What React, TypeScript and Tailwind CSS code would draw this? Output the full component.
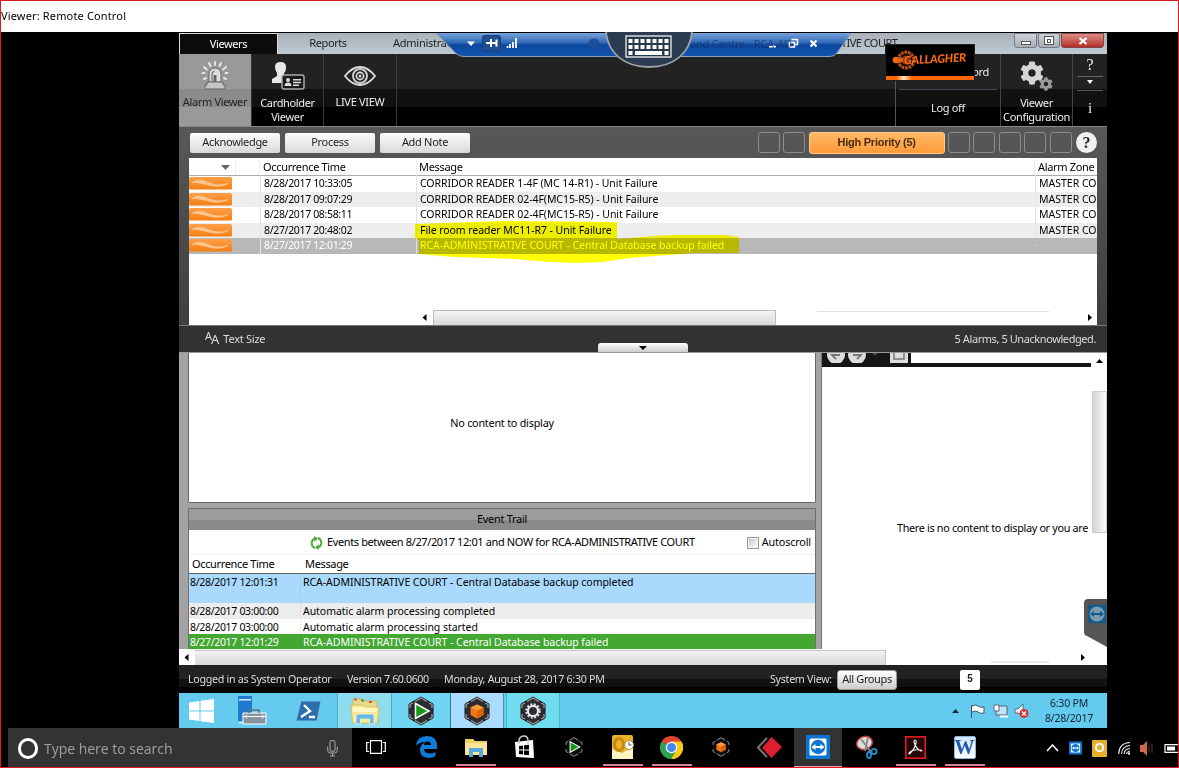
import React from 'react';
import { FaCog } from 'react-icons/fa';

const alarms = [
  { time: '8/28/2017 10:33:05', msg: 'CORRIDOR READER 1-4F (MC 14-R1) - Unit Failure', zone: 'MASTER CO', bg: 'bg-white' },
  { time: '8/28/2017 09:07:29', msg: 'CORRIDOR READER 02-4F(MC15-R5) - Unit Failure', zone: 'MASTER CO', bg: 'bg-[#ededed]' },
  { time: '8/28/2017 08:58:11', msg: 'CORRIDOR READER 02-4F(MC15-R5) - Unit Failure', zone: 'MASTER CO', bg: 'bg-white' },
  { time: '8/27/2017 20:48:02', msg: 'File room reader MC11-R7 - Unit Failure', zone: 'MASTER CO', bg: 'bg-[#ededed]' },
  { time: '8/27/2017 12:01:29', msg: 'RCA-ADMINISTRATIVE COURT - Central Database backup failed', zone: '', bg: 'bg-[#b8b8b8] text-white' },
];

const events = [
  { time: '8/28/2017 12:01:31', msg: 'RCA-ADMINISTRATIVE COURT - Central Database backup completed', cls: 'h-[29px] bg-[#a9dafd]' },
  { time: '8/28/2017 03:00:00', msg: 'Automatic alarm processing completed', cls: 'h-[16px] bg-[#ededed]' },
  { time: '8/28/2017 03:00:00', msg: 'Automatic alarm processing started', cls: 'h-[15px] bg-white' },
  { time: '8/27/2017 12:01:29', msg: 'RCA-ADMINISTRATIVE COURT - Central Database backup failed', cls: 'h-[15px] bg-[#42a832] text-white' },
];

function Wave() {
  return (
    <svg className="block h-[13px] w-[43px]" viewBox="0 0 43 13">
      <defs>
        <linearGradient id="wv" x1="0" y1="0" x2="0" y2="1">
          <stop offset="0" stopColor="#ffa04a" />
          <stop offset="1" stopColor="#f47f14" />
        </linearGradient>
      </defs>
      <rect width="43" height="12.5" rx="1.5" fill="url(#wv)" />
      <path d="M3 5.500Q9 1 19 5.500T39 6.500Q31 11 20 8T3 5.500Z" fill="#ffc48a" stroke="#ffc48a" strokeWidth="1" />
    </svg>
  );
}

function AlarmIcon() {
  return (
    <svg className="h-[30px] w-[28px]" viewBox="0 0 28 30">
      <g stroke="#e4e4e4" strokeWidth="2" strokeLinecap="round">
        <path d="M14 1v3M8 2l1.500 3M20 2l-1.500 3M3 6l3 2.500M25 6l-3 2.500M1.500 12h2M24.500 12h2M3 18l2-1M25 18l-2-1" />
      </g>
      <path d="M8 21V13a6 6 0 0 1 12 0v8z" fill="#dedede" stroke="#666" />
      <path d="M11 20v-6q0-3 2.500-4" fill="none" stroke="#888" strokeWidth="1.500" />
      <rect x="12.500" y="14" width="3" height="7" fill="#666" />
      <path d="M6 21h16v3h2v4H4v-4h2z" fill="#c4c4c4" stroke="#666" />
    </svg>
  );
}

function CardIcon() {
  return (
    <svg className="h-[30px] w-[34px]" viewBox="0 0 34 30">
      <path d="M4 6Q4 1 9.500 1T15 6t-2 6v3l4 3v4H1v-4l5-3v-3Q4 9 4 6Z" fill="#e8e8e8" />
      <rect x="11" y="14" width="22" height="14" rx="2" fill="#1a1a1a" stroke="#aaa" strokeWidth="1.500" />
      <circle cx="17" cy="19" r="2" fill="#ddd" />
      <path d="M13.500 25q0-3.500 3.500-3.500t3.500 3.500zM22 18h8v1.500h-8zM22 20.800h8v1.500h-8zM22 23.500h6V25h-6z" fill="#ddd" />
    </svg>
  );
}

function EyeIcon() {
  return (
    <svg className="h-[20px] w-[32px]" viewBox="0 0 32 20">
      <path d="M1 10Q8 1 16 1t15 9q-7 9-15 9T1 10Z" fill="#222" stroke="#ddd" strokeWidth="1.800" />
      <circle cx="16" cy="10" r="7" fill="#222" stroke="#ccc" strokeWidth="2" />
      <circle cx="16" cy="10" r="3.600" fill="none" stroke="#ddd" strokeWidth="1.600" />
      <circle cx="16" cy="10" r="1.500" fill="#ddd" />
    </svg>
  );
}

function HexIcon({ kind, small }: { kind: 'play' | 'cube' | 'gear'; small?: boolean }) {
  return (
    <svg className={small ? 'h-[24px] w-[20px]' : 'h-[30px] w-[28px]'} viewBox="0 0 28 30">
      <path d="M14 1L26 8v14l-12 7L2 22V8z" fill={small ? '#0d0d0d' : '#2b2d30'} stroke={small ? 'none' : '#15181a'} />
      <path d="M8 5.500L14 2l6 3.500M8 24.500L14 28l6-3.500M3 12V8.500L6 7M3 18v3.500L6 23M25 12V8.500L22 7M25 18v3.500L22 23" fill="none" stroke="#999" strokeWidth="1.300" />
      {kind === 'play' && <path d="M8.500 7.500L22 15 8.500 22.500z" fill="#159a18" stroke="#fff" strokeWidth="1.500" />}
      {kind === 'cube' && (
        <>
          <path d="M14 8.500l6.500 3v7.500L14 22.500 7.500 19v-7.500z" fill="#ee7414" />
          <path d="M14 8.500l6.500 3L14 15l-6.500-3.500z" fill="#ff9a3a" />
          <path d="M14 15l6.500-3.500V19L14 22.500z" fill="#e06008" />
        </>
      )}
      {kind === 'gear' && (
        <>
          <circle cx="14" cy="15" r="6.500" fill="none" stroke="#ddd" strokeWidth="2.400" strokeDasharray="2 1.400" />
          <circle cx="14" cy="15" r="5" fill="none" stroke="#eee" strokeWidth="2" />
        </>
      )}
    </svg>
  );
}

function FolderIcon() {
  return (
    <svg className="h-[20px] w-[22px]" viewBox="0 0 22 20">
      <path d="M0 2h8l2 2h12v14H0z" fill="#f0cf68" />
      <path d="M0 6h22v12H0z" fill="#ffe597" />
      <path d="M4 20v-9h14v9h-4v-5H8v5z" fill="#54abdc" />
    </svg>
  );
}

function LibrariesIcon() {
  return (
    <svg className="h-[28px] w-[32px]" viewBox="0 0 32 28">
      <path d="M4 2h9l2 2h13v7H4z" fill="#e9d98a" stroke="#c9b25c" strokeWidth=".8" />
      <path d="M5 1.500h3v2H5zM20 4h3v2h-3z" fill="#d05a3a" />
      <path d="M12 2.500h3v2h-3z" fill="#4a9a4a" />
      <path d="M2 8h12l2 2h14l-1.500 16H3.500z" fill="#fbe78e" stroke="#d2b95a" strokeWidth=".8" />
      <path d="M4 10l24 1-1 4H4z" fill="#fff6c4" />
      <path d="M7 27v-8q0-2 2-2h14q2 0 2 2v8h-4.500v-5h-9v5z" fill="#6cb9df" stroke="#e2f5fd" strokeWidth=".8" />
    </svg>
  );
}

function TeamViewer({ cls, fill = '#0a75d1' }: { cls: string; fill?: string }) {
  return (
    <svg className={cls} viewBox="0 0 24 24">
      <rect width="24" height="24" fill={fill} />
      <rect x="3.500" y="3.500" width="17" height="17" rx="1.500" fill="#fff" />
      <circle cx="12" cy="12" r="7.200" fill={fill} />
      <path d="M5.500 12l4-3v2h5V9l4 3-4 3v-2h-5v2z" fill="#fff" />
    </svg>
  );
}

function Btn({ children }: { children: React.ReactNode }) {
  return (
    <div className="flex h-[20px] w-[90px] items-center justify-center rounded-[2px] bg-linear-to-b from-[#fdfdfd] to-[#d9d9d9] text-[11px] tracking-[-0.300px] text-[#222]">
      {children}
    </div>
  );
}

function Slot() {
  return <div className="h-[21px] w-[22px] rounded-[3px] border border-[#8c8c8c]" />;
}

function TitleTabs() {
  return (
    <div className="relative flex h-[21px] bg-linear-to-b from-[#a9b1b8] to-[#bfcad3] text-[11px] tracking-[-0.400px] text-[#222]">
      <div className="flex w-[99px] items-center justify-center border border-b-0 border-[#ddd] bg-[#0c0c0c] text-white">Viewers</div>
      <div className="flex w-[100px] items-center justify-center">Reports</div>
      <div className="flex flex-1 items-center pl-[15px] tracking-[-0.250px]">Administration</div>
      <div className="flex w-[266px] items-center tracking-[-0.550px]">TIVE COURT</div>
      <div className="absolute right-[3px] top-0 flex h-[15px] gap-px">
        <div className="flex w-[23px] items-center justify-center rounded-b-[3px] border border-[#778] bg-linear-to-b from-[#ccd3d8] to-[#a8b0b6]">
          <div className="mt-1 h-[4px] w-[10px] border border-[#555] bg-white" />
        </div>
        <div className="flex w-[22px] items-center justify-center rounded-b-[3px] border border-[#778] bg-linear-to-b from-[#ccd3d8] to-[#a8b0b6]">
          <div className="flex h-[9px] w-[10px] items-center justify-center border border-[#555] bg-white">
            <div className="h-[4px] w-[4px] border border-[#555]" />
          </div>
        </div>
        <div className="flex w-[43px] items-center justify-center rounded-b-[3px] border border-[#844] bg-linear-to-b from-[#d98c86] to-[#b32a22]">
          <svg className="h-[8px] w-[10px]" viewBox="0 0 10 8"><path d="M1.500 1l7 6M8.500 1l-7 6" stroke="#fff" strokeWidth="2.300" /></svg>
        </div>
      </div>
    </div>
  );
}

function ConnectionBar() {
  return (
    <div className="absolute left-[255px] top-0 h-[36px] w-[430px]">
      <svg className="absolute left-0 top-0 h-[36px] w-[430px]" viewBox="0 0 430 36">
        <defs>
          <linearGradient id="cb" x1="0" y1="0" x2="0" y2="1">
            <stop offset="0" stopColor="#76a2dc" />
            <stop offset=".42" stopColor="#2f68b4" />
            <stop offset=".5" stopColor="#0d47a0" />
            <stop offset="1" stopColor="#1355ae" />
          </linearGradient>
        </defs>
        <path d="M2 0H417L403 20Q400 23.500 396 23.500H30Q25 23.500 22 20.500Z" fill="url(#cb)" />
        <path d="M2 0L22 20.500Q25 23.500 30 23.500H396Q400 23.500 403 20L417 0" fill="none" stroke="#8fa0b8" strokeWidth="1" />
        <path d="M33 8.500h8l-4 4.500z" fill="#fff" />
        <rect x="48.500" y="2.500" width="18" height="15.500" rx="2" fill="#204e90" stroke="#163d78" />
        <path d="M52 10h4.500M57 6v8M57 10h6M62.500 6.500v7" stroke="#fff" strokeWidth="2" />
        <path d="M73.500 15v-2M76 15v-4M79 15V9M82 15V5" stroke="#fff" strokeWidth="1.800" />
        <circle cx="160" cy="11" r="5.500" fill="#1d4d97" />
        <path d="M335 13.500h7" stroke="#fff" strokeWidth="2" />
        <path d="M357.500 6.500h6v5h-2M355.500 9.500h5v4.500h-5z" fill="none" stroke="#fff" strokeWidth="1.500" />
        <path d="M376.500 7.500l6 6M382.500 7.500l-6 6" stroke="#fff" strokeWidth="2.200" />
      </svg>
      <div className="relative flex h-[22px] items-center pl-[176px] text-[11px] text-[#10295c]/60">
        <span className="w-[80px] text-[#7f8fa8]">10.</span>
        <span className="whitespace-nowrap tracking-[-0.200px]">and Centre - RCA-AD</span>
      </div>
      <svg className="absolute left-[170px] top-[-1px] h-[37px] w-[90px]" viewBox="0 0 90 37">
        <path d="M2 0C4 21 20 35 45 35S86 21 88 0Z" fill="#2b3c50" />
        <path d="M2 0C4 21 20 35 45 35S86 21 88 0" fill="none" stroke="#9aa0a6" strokeWidth="1.800" />
        <rect x="22" y="4" width="45" height="21" fill="#26384b" stroke="#fff" strokeWidth="1.200" />
        <path d="M24.500 9h42M24.500 15h42" stroke="#fff" strokeWidth="4" strokeDasharray="4 2" />
        <path d="M24.500 21h4M31 21h27M60.500 21h4" stroke="#fff" strokeWidth="4" />
      </svg>
    </div>
  );
}

function Ribbon() {
  return (
    <div className="flex h-[72px] bg-[linear-gradient(#222_0_35px,#111_35px_53px,#000_53px)] text-[11px] leading-[14px] tracking-[-0.350px] text-[#eee]">
      <div className="flex w-[73px] flex-col items-center border-r border-[#333] bg-[linear-gradient(#999_0_35px,#8b8b8b_35px_53px,#999_53px)] pt-[7px] text-[#222]">
        <AlarmIcon />
        <span className="mt-[4px] whitespace-nowrap">Alarm Viewer</span>
      </div>
      <div className="flex w-[72px] flex-col items-center border-r border-[#3a3a3a] pt-[7px] text-center">
        <CardIcon />
        <span className="mt-[5px]">Cardholder<br />Viewer</span>
      </div>
      <div className="flex w-[73px] flex-col items-center border-r border-[#3a3a3a] pt-[12px]">
        <EyeIcon />
        <span className="mt-[9px] whitespace-nowrap tracking-[-0.300px]">LIVE VIEW</span>
      </div>
      <div className="flex-1" />
      <div className="flex w-[105px] flex-col border-l border-[#555]">
        <div className="mx-[3px] flex h-[36px] items-center justify-end border-b border-[#445] pr-[8px]">ord</div>
        <div className="flex h-[36px] items-center justify-center">Log off</div>
      </div>
      <div className="flex w-[73px] flex-col items-center border-x border-[#444] pt-[7px] text-center">
        <div className="flex h-[30px] w-[34px] items-start">
          <FaCog className="h-[24px] w-[24px] shrink-0 text-[#d5d5d5]" />
          <FaCog className="-ml-[5px] mt-[16px] h-[14px] w-[14px] shrink-0 text-[#999]" />
        </div>
        <span className="mt-[5px]">Viewer<br />Configuration</span>
      </div>
      <div className="flex w-[34px] flex-col items-center font-['Liberation_Serif',serif] text-[16px]">
        <div className="flex h-[23px] w-[26px] items-center justify-center border-b border-[#666]">?</div>
        <svg className="mt-[3px] h-[4px] w-[6px]" viewBox="0 0 6 4"><path d="M0 0h6L3 4z" fill="#fff" /></svg>
        <div className="mt-[6px] w-[26px] border-t border-[#555]" />
        <div className="mt-[10px] text-[15px]">i</div>
      </div>
    </div>
  );
}

function LogoBadge() {
  return (
    <div className="absolute left-[706px] top-[11px] h-[37px] w-[90px] border border-[#222] bg-black">
      <svg className="absolute left-[6px] top-[4px] h-[23px] w-[28px]" viewBox="0 0 30 25">
        <circle cx="15" cy="12" r="8.500" fill="none" stroke="#b84c18" strokeWidth="3.500" strokeDasharray="3 .8" />
        <circle cx="15" cy="12" r="5" fill="#8f3510" />
        <circle cx="4" cy="12" r="3.500" fill="#f26a12" />
        <circle cx="9" cy="12" r="3" fill="#e05a10" />
      </svg>
      <div className="absolute left-[18px] top-[6px] -rotate-3 font-['Lato',sans-serif] text-[11.500px] font-black italic leading-[15px] tracking-[-0.100px] text-[#f96a10]">GALLAGHER</div>
      <div className="absolute bottom-0 left-0 h-[4px] w-full bg-[linear-gradient(90deg,#f60_0,#f60_12%,#ffe2c0_20%,#f60_30%,#f60)]" />
    </div>
  );
}

function AlarmPanel() {
  return (
    <div className="relative h-[226px] border-t border-[#888] bg-linear-to-b from-[#585858] to-[#3c3c3c]">
      <div className="flex h-[31px] items-center pl-[11px] pr-[10px]">
        <div className="flex gap-[5px]">
          <Btn>Acknowledge</Btn>
          <Btn>Process</Btn>
          <Btn>Add Note</Btn>
        </div>
        <div className="ml-auto flex items-center gap-[3.400px]">
          <Slot /><Slot />
          <div className="flex h-[22px] w-[136px] items-center justify-center rounded-[3px] border border-[#ffc98a] bg-linear-to-b from-[#ffb765] to-[#ff9b38] font-['Liberation_Sans',sans-serif] text-[11px] font-bold tracking-[-0.250px] text-[#4a2c0c]">High Priority (5)</div>
          <Slot /><Slot /><Slot /><Slot /><Slot />
          <div className="ml-px flex h-[21px] w-[21px] items-center justify-center rounded-full bg-[#f0f0f0] font-['Liberation_Serif',serif] text-[16px] font-bold text-[#222]">?</div>
        </div>
      </div>
      <div className="relative ml-[10px] flex h-[167px] w-[908px] flex-col overflow-hidden bg-white text-[11px] text-black">
        <div className="flex h-[18px] items-center border-b border-[#aaa] pt-px tracking-[-0.330px]">
          <div className="flex h-full w-[47px] items-center border-r border-[#eee] pl-[32px]">
            <svg className="h-[5px] w-[9px]" viewBox="0 0 9 5"><path d="M0 0h9L4.500 5z" fill="#666" /></svg>
          </div>
          <div className="h-full w-[24px] border-r border-[#eee]" />
          <div className="w-[156px] pl-[3px]">Occurrence Time</div>
          <div className="w-[618px] border-l border-[#eee] pl-[2px]">Message</div>
          <div className="whitespace-nowrap border-l border-[#eee] pl-[3px]">Alarm Zone</div>
        </div>
        {alarms.map((a) => (
          <div key={a.time} className={`flex h-[15.500px] shrink-0 items-center whitespace-nowrap text-[10.500px] ${a.bg}`}>
            <div className="w-[71px]"><Wave /></div>
            <div className="w-[156px] border-l border-[#e4e4e4] pl-[3px] pt-px tracking-[-0.340px]">{a.time}</div>
            <div className="w-[619px] border-l border-[#e4e4e4] pl-[3px] pt-px tracking-[-0.060px]">{a.msg}</div>
            <div className="border-l border-[#e4e4e4] pl-[3px] pt-px">{a.zone}</div>
          </div>
        ))}
        <svg className="absolute left-[225px] top-[62px] h-[44px] w-[326px] mix-blend-multiply" viewBox="0 0 326 44">
          <path d="M1 4L90 1 203 2 203 19 240 16 260 15H310L325 17V33L280 33 215 38 188 42 162 43 138 42 100 39 40 37 5 34V20L1 18Z" fill="#ffff00" />
        </svg>
        <div className="mt-auto flex h-[15px] items-center pl-[233px] pr-[5px]">
          <svg className="h-[7px] w-[5px]" viewBox="0 0 5 7"><path d="M4.500 0v7L.5 3.500z" /></svg>
          <div className="ml-[6px] h-[15px] w-[343px] border border-b-0 border-[#bbb] bg-linear-to-b from-[#f5f5f5] to-[#d8d8d8]" />
          <div className="ml-[41px] h-[14px] w-[232px] border-t border-[#ddd]" />
          <svg className="ml-auto h-[7px] w-[4px]" viewBox="0 0 4 7"><path d="M0 0v7l4-3.500z" /></svg>
        </div>
      </div>
      <div className="flex h-[27px] items-center border-t border-[#777] bg-[#323232] pl-[26px] pr-[11px] text-[11px] text-[#ddd]">
        <div className="flex items-start font-['Noto_Sans',sans-serif] leading-[14px]">
          <span className="-mt-[3px] text-[11px]">A</span><span className="-ml-px text-[13px]">A</span>
        </div>
        <span className="ml-[4px] tracking-[-0.250px]">Text Size</span>
        <span className="ml-auto tracking-[-0.420px]">5 Alarms, 5 Unacknowledged.</span>
      </div>
      <div className="absolute bottom-0 left-[419px] flex h-[9px] w-[90px] items-center justify-center rounded-t-[3px] bg-linear-to-b from-white to-[#ccc]">
        <svg className="h-[4px] w-[8px]" viewBox="0 0 8 4"><path d="M0 0h8L4 4z" /></svg>
      </div>
    </div>
  );
}

function LowerPanes() {
  return (
    <div className="relative flex h-[297px] border-t border-[#999] bg-[#a3a3a3] text-[11px] text-black">
      <div className="ml-[9px] flex w-[628px] flex-col">
        <div className="flex h-[150px] items-center justify-center rounded-b-[2px] border border-t-0 border-[#666] bg-white">
          <span className="-mt-[9px] text-[10.800px] tracking-[-0.220px]">No content to display</span>
        </div>
        <div className="mt-[5px] flex flex-1 flex-col border border-b-0 border-[#707070] bg-white">
          <div className="flex h-[21px] items-center justify-center bg-[linear-gradient(#9c9c9c_0_11px,#8a8a8a_11px)] tracking-[-0.300px]">Event Trail</div>
          <div className="flex h-[25px] items-center border-b border-[#eee] pl-[121px] pr-[4px] pt-px">
            <svg className="h-[14px] w-[13px]" viewBox="0 0 13 14">
              <path d="M5 2.500Q1.500 4 1.700 7.500T5 12M8 11.500q3.500-1.500 3.300-5T8 2" fill="none" stroke="#4caf3c" strokeWidth="2" />
              <path d="M4 0l4 2.500L4.500 6zM9 8l-.500 6L5 11.500z" fill="#4caf3c" />
            </svg>
            <span className="ml-[4px] whitespace-nowrap tracking-[-0.380px]">Events between 8/27/2017 12:01 and NOW for RCA-ADMINISTRATIVE COURT</span>
            <span className="ml-auto flex h-[12px] w-[12px] border border-[#999] bg-[#f2f2f2] p-px">
              <span className="flex-1 bg-linear-to-br from-[#c4c4c4] to-white" />
            </span>
            <span className="ml-[3px] text-[10.800px] tracking-[-0.150px]">Autoscroll</span>
          </div>
          <div className="flex h-[19px] items-center border-b border-[#666] pt-px tracking-[-0.350px]">
            <span className="w-[113px] pl-[3px]">Occurrence Time</span>
            <span className="pl-[3px]">Message</span>
          </div>
          {events.map((e, i) => (
            <div key={i} className={`flex shrink-0 whitespace-nowrap text-[10.500px] leading-[16px] ${e.cls}`}>
              <span className="w-[112px] border-r border-black/5 pl-px tracking-[-0.320px]">{e.time}</span>
              <span className="pl-[2px] tracking-[-0.040px]">{e.msg}</span>
            </div>
          ))}
        </div>
      </div>
      <div className="ml-[5px] flex flex-1 border-l border-[#777] bg-white">
        <div className="flex flex-1 flex-col">
          <div className="flex h-[14px] overflow-hidden border-b-[4px] border-[#151515] bg-[#151515] pl-[5px]">
            <svg className="h-[12px] w-[82px] shrink-0" viewBox="0 0 82 12">
              <circle cx="9" cy="2" r="9" fill="#ddd" /><circle cx="30" cy="2" r="9" fill="#ddd" />
              <path d="M13 2H5l4 4M26 2h8l-4 4" fill="none" stroke="#777" strokeWidth="1.800" />
              <path d="M45 0h6l-3 3z" fill="#444" />
              <path d="M63 0h18v10H63z" fill="#ddd" /><path d="M67 0v6h10V0" fill="none" stroke="#777" strokeWidth="1.500" />
            </svg>
            <div className="ml-[2px] flex-1 bg-white" />
          </div>
          <div className="flex flex-1 items-center justify-end whitespace-nowrap pr-[3px] pt-[40px] text-[10.800px] tracking-[-0.310px]">There is no content to display or you are</div>
        </div>
        <div className="flex w-[16px] flex-col items-center pt-[6px]">
          <svg className="h-[4px] w-[7px]" viewBox="0 0 7 4"><path d="M0 4h7L3.500 0z" /></svg>
          <div className="mt-[28px] h-[142px] w-[15px] border border-[#ccc] bg-linear-to-r from-[#d5d5d5] to-[#fafafa]" />
        </div>
      </div>
      <div className="absolute right-0 top-[246px] h-[48px] w-[23px]">
        <svg className="absolute inset-0 h-[48px] w-[23px]" viewBox="0 0 23 48"><path d="M0 4Q0 0 4 0H23V48L3 37Q0 36 0 33Z" fill="#555" /></svg>
        <svg className="absolute left-[4px] top-[6px] h-[18px] w-[18px]" viewBox="0 0 18 18">
          <rect width="18" height="18" fill="#11598f" /><circle cx="9" cy="9" r="7.500" fill="#7d9ab0" />
          <path d="M2 9l4-3v2h6V6l4 3-4 3v-2H6v2z" fill="#11598f" />
        </svg>
      </div>
    </div>
  );
}

function StatusBar() {
  return (
    <>
      <div className="flex h-[16px] items-center bg-white pl-[5px]">
        <svg className="h-[7px] w-[5px]" viewBox="0 0 5 7"><path d="M4.500 0v7L.5 3.500z" /></svg>
        <div className="ml-[6px] h-[15px] w-[691px] border-r border-t border-[#c4c4c4] bg-linear-to-b from-[#f2f2f2] to-[#d8d8d8]" />
        <div className="ml-[105px] h-[4px] w-[58px] self-end border-t-[2px] border-[#e8e8e8]" />
        <svg className="ml-auto mr-[22px] h-[7px] w-[4px]" viewBox="0 0 4 7"><path d="M0 0v7l4-3.500z" /></svg>
      </div>
      <div className="flex h-[28px] items-center whitespace-nowrap bg-[linear-gradient(#222_0_14px,#111_14px_22px,#000_22px)] pl-[9px] pt-px text-[10.700px] tracking-[-0.290px] text-[#ddd]">
        <span className="w-[159px]">Logged in as System Operator</span>
        <span className="w-[97px] tracking-[-0.420px]">Version 7.60.0600</span>
        <span className="w-[326px]">Monday, August 28, 2017 6:30 PM</span>
        <span>System View:</span>
        <span className="ml-auto mr-[63px] flex h-[20px] w-[60px] items-center justify-center rounded-[3px] border border-[#999] bg-linear-to-b from-white to-[#ccc] text-[11px] tracking-[-0.380px] text-[#222]">All Groups</span>
        <span className="mr-[127px] flex h-[20px] w-[20px] items-start justify-center rounded-[2px] bg-white pt-px font-['Liberation_Sans',sans-serif] text-[10px] font-bold text-[#222]">5</span>
      </div>
    </>
  );
}

function ServerTaskbar() {
  return (
    <div className="flex h-[35px] bg-[#64cbee] text-[#123]">
      <div className="flex w-[158px] items-center pl-[10px]">
        <svg className="h-[24px] w-[25px]" viewBox="0 0 25 24"><path d="M0 3.500L10.500 2v9.500H0zM11.500 1.800L25 0v11.500H11.500zM0 12.500h10.500V22L0 20.500zM11.500 12.500H25V24l-13.500-1.800z" fill="#fff" /></svg>
        <svg className="ml-[23px] h-[29px] w-[30px]" viewBox="0 0 30 29">
          <path d="M1 0h14v25H1z" fill="#1f7ad0" /><path d="M2 3h12v1.500H2zM2 26h8v1.500H2z" fill="#d6ecff" />
          <path d="M6 17h23v11H6z" fill="#8794a0" stroke="#fff" /><path d="M12 17v-3h10v3" fill="none" stroke="#68747f" strokeWidth="1.500" />
          <path d="M6 20.500h23M10 18.500l-2 2 2 2M25 18.500l2 2-2 2" fill="none" stroke="#fff" />
        </svg>
        <svg className="ml-[29px] h-[20px] w-[25px]" viewBox="0 0 25 20">
          <path d="M5 0h20l-4 20H0z" fill="#2a6fac" stroke="#7fb9e2" /><path d="M8 4l6 6-9 6M13 16h6" fill="none" stroke="#fff" strokeWidth="2.300" />
        </svg>
      </div>
      <div className="flex w-[55px] items-center justify-center border-x border-[#49a9d1] bg-[#8edced]"><LibrariesIcon /></div>
      <div className="flex w-[59px] items-center justify-center border-r border-[#287890] bg-[#70d5f2]"><HexIcon kind="play" /></div>
      <div className="flex w-[53px] items-center justify-center border-r border-[#3f8fb6] bg-[#a9dcff]"><HexIcon kind="cube" /></div>
      <div className="ml-[2px] flex w-[54px] items-center justify-center border-x border-[#4fb5c5] bg-[#70dcf0]"><HexIcon kind="gear" /></div>
      <div className="ml-auto mr-[15px] flex items-center">
        <svg className="h-[4px] w-[7px]" viewBox="0 0 7 4"><path d="M0 4h7L3.500 0z" fill="#122c3a" /></svg>
        <svg className="ml-[11px] h-[16px] w-[60px]" viewBox="0 0 60 16">
          <path d="M1.500 2v13M2 3q4-2 6 0t6 1v6q-4 1-6-1T2 9" fill="#fff" stroke="#456" />
          <path d="M26 3h11v9H26z" fill="#bfe6f5" stroke="#567" /><path d="M30 13.500h8" stroke="#fff" strokeWidth="2" /><path d="M24 2h5v6h-5z" fill="#fff" stroke="#567" />
          <path d="M45 6h3l5-5v13l-5-4h-3z" fill="#fff" stroke="#567" /><circle cx="54" cy="10.500" r="4.500" fill="#dc2f2f" /><path d="M52 8.500l4 4M56 8.500l-4 4" stroke="#fff" strokeWidth="1.300" />
        </svg>
      </div>
      <div className="mr-[14px] flex flex-col items-center pt-[3px] text-[10.500px] leading-[15px] tracking-[-0.200px]"><span>6:30 PM</span><span>8/28/2017</span></div>
    </div>
  );
}

function Task({ cls, children }: { cls: string; children: React.ReactNode }) {
  return <div className={`flex h-full items-center justify-center border-b-2 ${cls}`}>{children}</div>;
}

function Line() {
  return <div className="absolute bottom-0 h-[2px] w-[40px] bg-[#d98494]" />;
}

function HostTaskbar() {
  const off = 'w-[49px] border-transparent';
  const on = 'relative w-[49px] border-transparent';
  return (
    <div className="flex h-[40px] bg-black pl-[8px]">
      <div className="flex w-[344px] items-center bg-[#333] pl-[10px] pr-[14px]">
        <div className="h-[21px] w-[20px] rounded-full border-[3px] border-white" />
        <span className="ml-[6px] font-['Open_Sans',sans-serif] text-[14px] tracking-[-0.020px] text-[#a0a0a0]">Type here to search</span>
        <svg className="ml-auto h-[17px] w-[11px]" viewBox="0 0 11 17"><rect x="3" y=".7" width="5" height="10.500" rx="1" fill="none" stroke="#aaa" /><path d="M.7 6.500v4Q1 13 3 13h5q2 0 2.300-2.500v-4M5.500 13v3M3 16h5" fill="none" stroke="#aaa" /></svg>
      </div>
      <Task cls="w-[48px] border-transparent">
        <svg className="h-[14px] w-[20px]" viewBox="0 0 20 14"><path d="M4.500.7h11v12.600h-11zM3 2.500H.7v9H3M17 2.500h2.300v9H17" fill="none" stroke="#fff" strokeWidth="1.200" /></svg>
      </Task>
      <Task cls="w-[53px] border-transparent">
        <svg className="h-[22px] w-[21px]" viewBox="0 0 21 22"><path d="M0 10Q1 0 11 0q10 0 10 10v3H8q.5 4.500 5.500 4.500 3.500 0 6-1.500v4Q16.500 22 12.500 22 4 21.500 4 14q0-5 5-8Q3 6 0 10ZM8 9h7q0-3.500-3.500-3.500T8 9Z" fill="#0b7ddb" fillRule="evenodd" /></svg>
      </Task>
      <Task cls="relative w-[45px] border-transparent"><FolderIcon /><Line /></Task>
      <Task cls="w-[52px] border-transparent">
        <svg className="h-[24px] w-[20px]" viewBox="0 0 20 24"><path d="M1 7l18-2 1 18L2 22z" fill="#fff" /><path d="M5 9V5q1-4 5-4t4 5v3" fill="none" stroke="#ccc" strokeWidth="1.500" /><path d="M5 11l4-.5v4H5zM10 10.300l5-.6v4.800h-5zM5 15.500h4v4l-4-.5zM10 15.500h5v4.800l-5-.6z" fill="#000" /></svg>
      </Task>
      <Task cls="w-[48px] border-transparent"><HexIcon kind="play" small /></Task>
      <Task cls={on}>
        <svg className="h-[24px] w-[24px]" viewBox="0 0 24 24"><rect x="1" width="21" height="24" rx="2" fill="#e9b32c" /><path d="M1 14l10 4 11-6v12H1z" fill="#fff3c4" /><ellipse cx="8" cy="9.500" rx="4.500" ry="6" fill="none" stroke="#c98a10" strokeWidth="3" /><circle cx="18" cy="10" r="4.500" fill="#fff" stroke="#ba8a1e" /><path d="M18 7v3h2.500" fill="none" stroke="#555" /></svg>
        <Line />
      </Task>
      <Task cls={on}>
        <svg className="h-[23px] w-[23px]" viewBox="0 0 24 24"><path d="M12 12L1.600 6A12 12 0 0 1 22.400 6z" fill="#df4435" /><path d="M12 12L1.600 6A12 12 0 0 0 12 24z" fill="#2fa351" /><path d="M12 24A12 12 0 0 0 22.400 6H12z" fill="#fbc91a" /><path d="M1.600 6L7 15l5-3zM12 24l5-9-5-3-5 3z" fill="#2fa351" /><path d="M12 24A12 12 0 0 0 22.400 6H12l5 9z" fill="#fbc91a" /><circle cx="12" cy="12" r="6" fill="#fff" /><circle cx="12" cy="12" r="4.700" fill="#4287ee" /></svg>
        <Line />
      </Task>
      <Task cls={off}><HexIcon kind="cube" small /></Task>
      <Task cls={off}>
        <svg className="h-[23px] w-[25px]" viewBox="0 0 25 23"><path d="M10 2L1 11.500l9 9.500" fill="none" stroke="#777" strokeWidth="2" /><path d="M14.500 1L25 11 14.500 22 5 12z" fill="#df1e2e" /></svg>
      </Task>
      <Task cls="w-[48px] border-[#e8a0b0] bg-[#333]"><TeamViewer cls="h-[24px] w-[24px]" /></Task>
      <Task cls={off}>
        <svg className="h-[24px] w-[22px]" viewBox="0 0 22 24"><ellipse cx="8.500" cy="8" rx="8" ry="6.500" transform="rotate(-20 8.500 8)" fill="#ddd" stroke="#b33" strokeWidth="1.500" /><path d="M5 4l10 13M12 2L9 16" stroke="#888" strokeWidth="1.800" /><circle cx="18" cy="16.500" r="2.700" fill="none" stroke="#2292c4" strokeWidth="1.800" /><ellipse cx="13" cy="20" rx="2" ry="3" fill="none" stroke="#2292c4" strokeWidth="1.800" /></svg>
      </Task>
      <Task cls={on}>
        <svg className="h-[23px] w-[21px]" viewBox="0 0 21 23"><rect x=".8" y=".8" width="19.400" height="21.400" fill="#220507" stroke="#e31b1b" strokeWidth="1.600" /><path d="M10 4q2 0 .5 5Q9 14 5 17.500q-1.500 1-1-.500Q7 13 16 14q2 1 0 1Q11 13 9 6q0-2 1-2Z" fill="none" stroke="#fff" strokeWidth="1.100" /></svg>
        <Line />
      </Task>
      <Task cls={on}>
        <div className="flex h-[23px] w-[22px] items-center justify-center rounded-[2px] border border-[#8bb5e6] bg-linear-to-b from-[#cfe3fa] to-white font-['Liberation_Serif',serif] text-[20px] font-bold leading-none text-[#2158ae]">W</div>
        <Line />
      </Task>
      <div className="ml-auto flex items-center">
        <svg className="h-[8px] w-[13px]" viewBox="0 0 13 8"><path d="M1 7l5.500-6L12 7" fill="none" stroke="#fff" strokeWidth="1.500" /></svg>
        <TeamViewer cls="ml-[10px] h-[14px] w-[13px]" />
        <div className="ml-[10px] flex h-[17px] w-[15px] items-center justify-center rounded-[1px] bg-[#e7b02b] font-['Liberation_Sans',sans-serif] text-[13px] font-bold text-white">O</div>
        <svg className="ml-[11px] h-[14px] w-[12px]" viewBox="0 0 12 14"><g fill="none" stroke="#eee" strokeWidth="1.100"><path d="M.7 13Q1 2 12 1.500M3.500 13Q4 5 12 4.500M6 13q.5-5 6-5.500M8.500 13q.5-2.500 3.500-3" /></g><circle cx="11" cy="12.500" r="1.200" fill="#fff" /></svg>
        <svg className="ml-[10px] h-[15px] w-[14px]" viewBox="0 0 14 15"><path d="M0 4h3l4-4v15l-4-4H0z" fill="#d0694c" /><path d="M9 4v7M12 3v9" stroke="#542" /></svg>
        <svg className="ml-[10px] h-[9px] w-[15px]" viewBox="0 0 15 9"><path d="M15 .7H1v7.600h14" fill="none" stroke="#fff" strokeWidth="1.200" /><rect x="3" y="2.500" width="8" height="4" fill="#fff" /></svg>
      </div>
    </div>
  );
}

export default function App() {
  return (
    <div className="relative flex h-[768px] w-[1179px] flex-col overflow-hidden bg-black font-['Noto_Sans',sans-serif]">
      <div className="flex h-[32px] items-center bg-white pl-px text-[11px] tracking-[0.150px] text-black">Viewer: Remote Control</div>
      <div className="flex h-[696px] justify-start pl-[179px] pt-px">
        <div className="relative flex w-[928px] flex-col">
          <TitleTabs />
          <Ribbon />
          <AlarmPanel />
          <LowerPanes />
          <StatusBar />
          <ServerTaskbar />
          <ConnectionBar />
          <LogoBadge />
        </div>
      </div>
      <HostTaskbar />
      <div className="pointer-events-none absolute inset-0 border border-[#e0181f]" />
    </div>
  );
}
